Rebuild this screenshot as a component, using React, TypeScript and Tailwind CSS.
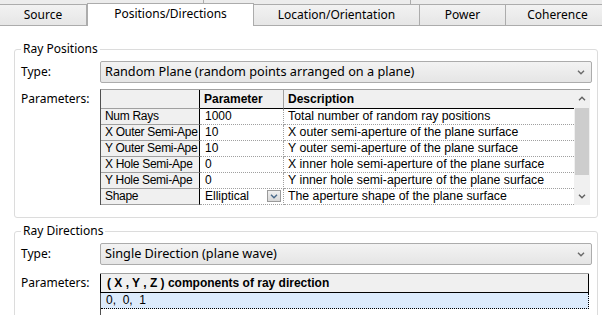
import React from 'react';

const rows: [string, string, string][] = [
  ['Num Rays', '1000', 'Total number of random ray positions'],
  ['X Outer Semi-Ape', '10', 'X outer semi-aperture of the plane surface'],
  ['Y Outer Semi-Ape', '10', 'Y outer semi-aperture of the plane surface'],
  ['X Hole Semi-Ape', '0', 'X inner hole semi-aperture of the plane surface'],
  ['Y Hole Semi-Ape', '0', 'Y inner hole semi-aperture of the plane surface'],
  ['Shape', 'Elliptical', 'The aperture shape of the plane surface'],
];

function Chevron({ up = false, color = '#6a6a6a' }: { up?: boolean; color?: string }) {
  return (
    <svg width="8" height="5" viewBox="0 0 8 5">
      <path d={up ? 'M1 4.2 L4 1.2 L7 4.2' : 'M1 0.8 L4 3.8 L7 0.8'} fill="none" stroke={color} strokeWidth="1.4" />
    </svg>
  );
}

function Tab({ label, w, active = false }: { label: string; w: string; active?: boolean }) {
  if (active) {
    return (
      <div className={`${w} relative z-10 -mt-[2px] flex h-[23px] shrink-0 justify-center border-x border-t border-[#acacac] bg-white pt-[1px] leading-[18px]`}>
        {label}
      </div>
    );
  }
  return (
    <div className={`${w} flex h-[21px] shrink-0 items-center justify-center border-r border-b border-[#acacac] bg-linear-to-b from-[#f2f2f2] to-[#e6e6e6] leading-[18px]`}>
      {label}
    </div>
  );
}

function Select({ text }: { text: string }) {
  return (
    <div className="flex h-[22px] w-[492px] items-center justify-between rounded-[2px] border border-[#acacac] bg-linear-to-b from-[#f3f3f3] to-[#e5e5e5] pl-[4px] pr-[6px]">
      <span className="text-[12.7px]">{text}</span>
      <Chevron />
    </div>
  );
}

function Group({ title, children, className = '' }: { title: string; children: React.ReactNode; className?: string }) {
  return (
    <fieldset className={`rounded-[3px] border border-[#dcdcdc] pl-[6px] pr-[4px] ${className}`}>
      <legend className="px-[2px] leading-[18px]">{title}</legend>
      {children}
    </fieldset>
  );
}

function PositionsTable() {
  return (
    <div className="flex w-[490px] border-t border-l border-t-[#a0a0a0] border-l-[#505050] font-['Liberation_Sans',Arial,sans-serif] text-[12px] leading-[15px]">
      <div className="w-[473px]">
        <div className="flex h-[19px] bg-[#f0f0f0] font-bold">
          <div className="w-[99px] border-r border-b border-r-black border-b-[#a0a0a0]" />
          <div className="flex w-[84px] items-center border-r border-b border-r-[#a0a0a0] border-b-black pl-[4px]">Parameter</div>
          <div className="flex w-[290px] items-center border-b border-black pl-[4px]">Description</div>
        </div>
        {rows.map(([name, value, desc]) => (
          <div key={name} className="flex h-[16px]">
            <div className="w-[99px] overflow-hidden whitespace-nowrap border-r border-b border-r-black border-b-[#a0a0a0] bg-[#f0f0f0] pl-[4px] tracking-[-0.3px]">
              {name}
            </div>
            <div className="flex w-[84px] items-start justify-between border-r border-b border-dotted border-[#a0a0a0] pl-[5px] pr-[2px]">
              <span>{value}</span>
              {name === 'Shape' && (
                <span className="mt-[1px] flex h-[12px] w-[14px] items-center justify-center border border-[#9a9a9a] bg-linear-to-b from-[#f0f0f0] to-[#d8d8d8]">
                  <Chevron color="#4a6a8a" />
                </span>
              )}
            </div>
            <div className="w-[290px] whitespace-nowrap border-b border-dotted border-[#a0a0a0] pl-[4px] text-[12.3px]">{desc}</div>
          </div>
        ))}
      </div>
      <div className="flex w-[17px] flex-col bg-[#f0f0f0]">
        <div className="flex h-[17px] items-center justify-center">
          <Chevron up color="#606060" />
        </div>
        <div className="mx-[1px] mt-[1px] h-[67px] bg-[#cdcdcd]" />
        <div className="flex-1" />
        <div className="flex h-[17px] items-center justify-center">
          <Chevron color="#606060" />
        </div>
      </div>
    </div>
  );
}

function DirectionsTable() {
  return (
    <div className="w-[489px] border-t border-[#a0a0a0] font-['Liberation_Sans',Arial,sans-serif] text-[12px] leading-[15px]">
      <div className="flex h-[19px] items-center border-x border-b border-black bg-[#f0f0f0] pl-[6px] font-bold">
        ( X , Y , Z ) components of ray direction
      </div>
      <div className="border-l border-[#505050]">
        <div className="h-[16px] whitespace-pre border-r border-b border-dotted border-black bg-[#dcebfc] pl-[5px]">
          0,  0,  1
        </div>
        <div className="h-[16px] bg-white" />
      </div>
    </div>
  );
}

export default function App() {
  return (
    <div className="h-[315px] w-[602px] overflow-hidden bg-white font-['Noto_Sans','Liberation_Sans',sans-serif] text-[12px] text-black">
      <div className="h-[26px]">
        <div className="flex h-[5px] border-b border-[#acacac] bg-[#ececec]">
          <div className="w-[204px] border-r border-[#acacac]" />
          <div className="w-[207px] border-r border-[#acacac]" />
          <div className="flex-1" />
        </div>
        <div className="flex items-start">
          <Tab label="Source" w="w-[87px]" />
          <Tab label="Positions/Directions" w="w-[167px]" active />
          <Tab label="Location/Orientation" w="w-[166px]" />
          <Tab label="Power" w="w-[86px]" />
          <Tab label="Coherence" w="w-[104px]" />
        </div>
      </div>

      <div className="pl-[14px] pr-[4px] pt-[14px]">
        <Group title="Ray Positions" className="pb-[12px]">
          <div className="mt-[3px] flex items-center">
            <div className="w-[79px]">Type:</div>
            <Select text="Random Plane (random points arranged on a plane)" />
          </div>
          <div className="mt-[6px] flex items-start">
            <div className="w-[79px] pt-[1px] leading-[18px]">Parameters:</div>
            <PositionsTable />
          </div>
        </Group>

        <Group title="Ray Directions" className="mt-[4px] pb-[20px]">
          <div className="mt-[3px] flex items-center">
            <div className="w-[79px]">Type:</div>
            <Select text="Single Direction (plane wave)" />
          </div>
          <div className="mt-[8px] flex items-start">
            <div className="w-[79px] pt-[1px] leading-[18px]">Parameters:</div>
            <DirectionsTable />
          </div>
        </Group>
      </div>
    </div>
  );
}
